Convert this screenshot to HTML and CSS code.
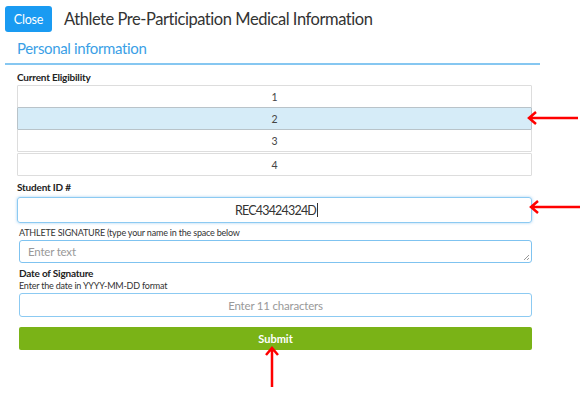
FILE: index.html
```html
<!DOCTYPE html>
<html>
<head>
<meta charset="utf-8">
<link rel="stylesheet" href="styles.css">
</head>
<body>
<div class="page">
  <header class="header">
    <button class="close-btn">Close</button>
    <h1 class="title">Athlete Pre-Participation Medical Information</h1>
  </header>
  <h2 class="section-title">Personal information</h2>
  <form class="form">
    <div class="label bold">Current Eligibility</div>
    <div class="options">
      <div class="option">1</div>
      <div class="option selected">2</div>
      <div class="option">3</div>
      <div class="option">4</div>
    </div>
    <div class="label bold label-gap">Student ID #</div>
    <div class="input focused"><span class="value">REC43424324D</span><span class="caret"></span></div>
    <div class="indent">
      <div class="label small">ATHLETE SIGNATURE (type your name in the space below</div>
      <div class="textarea"><span class="placeholder">Enter text</span>
        <svg class="grip" width="7" height="7" viewBox="0 0 7 7"><path d="M6 1 L1 6 M6 4 L4 6" stroke="#999" stroke-width="1"/></svg>
      </div>
      <div class="label bold label-gap2">Date of Signature</div>
      <div class="label small">Enter the date in YYYY-MM-DD format</div>
      <div class="input plain center"><span class="placeholder">Enter 11 characters</span></div>
      <button class="submit" type="button">Submit</button>
    </div>
  </form>
  <svg class="arrow arrow-1" width="52" height="14" viewBox="0 0 52 14"><path d="M51 7 H3 M9 1 L2 7 L9 13" stroke="#ff0000" stroke-width="2.5" fill="none"/></svg>
  <svg class="arrow arrow-2" width="52" height="14" viewBox="0 0 52 14"><path d="M51 7 H3 M9 1 L2 7 L9 13" stroke="#ff0000" stroke-width="2.5" fill="none"/></svg>
  <svg class="arrow arrow-3" width="14" height="42" viewBox="0 0 14 42"><path d="M7 41 V3 M1 9 L7 2 L13 9" stroke="#ff0000" stroke-width="2.5" fill="none"/></svg>
</div>
</body>
</html>
```
FILE: styles.css
```css
* { box-sizing: border-box; }
html, body { margin: 0; padding: 0; background: #fff; }
body { font-family: Lato, "Open Sans", sans-serif; color: #333; }
.page { position: relative; width: 583px; height: 404px; padding: 6px 0 0 5px; }
.header { display: flex; align-items: center; gap: 12px; height: 26px; }
.close-btn {
  width: 47px; height: 26px; border: none; border-radius: 3px;
  background: #1a9bf2; color: #fff; font-family: inherit; font-size: 12.5px; padding: 0; letter-spacing: -0.2px;
}
.title { margin: 0; font-size: 16.5px; font-weight: 400; color: #333; letter-spacing: -0.45px; }
.section-title {
  margin: 7px 0 0 0; width: 535px; padding: 0 0 6px 12px; font-size: 15px; font-weight: 400;
  color: #3b9fe6; border-bottom: 2px solid #86c7f1; line-height: 18px; letter-spacing: -0.35px;
}
.form { width: 527px; padding-left: 12px; margin-top: 6px; }
.label { font-size: 10px; line-height: 13px; color: #222; letter-spacing: -0.2px; }
.bold { font-weight: 700; }
.small { font-weight: 400; font-size: 9px; line-height: 12px; color: #333; }
.options { margin-top: 1px; display: flex; flex-direction: column; }
.option {
  height: 23px; border: 1px solid #ddd; border-radius: 1px; display: flex; align-items: center;
  justify-content: center; font-size: 10.5px; color: #444; margin-top: -1px;
}
.option:first-child { margin-top: 0; }
.option:last-child { margin-top: 1px; }
.option.selected { background: #d6ecf8; border-color: #b9c3c9; position: relative; }
.label-gap { margin-top: 5px; }
.input {
  height: 26px; border: 1px solid #8ccaf2; border-radius: 3px; display: flex; align-items: center;
  justify-content: center; font-size: 12.5px; margin-top: 2px;
}
.input.focused { box-shadow: 0 0 3px rgba(102,175,233,0.6); padding-left: 4px; margin-top: 3px; }
.value { color: #333; letter-spacing: -0.8px; }
.caret { display: inline-block; width: 1px; height: 14px; background: #333; margin-left: 1px; }
.indent { padding-left: 2px; margin-top: 4px; }
.textarea {
  position: relative; height: 23px; border: 1px solid #7fc3f0; border-radius: 3px; margin-top: 1px;
  display: flex; align-items: center; padding-left: 8px; font-size: 11.5px;
}
.placeholder { color: #999; font-size: 11.5px; letter-spacing: -0.2px; }
.grip { position: absolute; right: 1px; bottom: 1px; }
.label-gap2 { margin-top: 4px; }
.input.plain { height: 24px; margin-top: 1px; }
.submit {
  display: block; width: 100%; height: 23px; margin-top: 10px; border: none; border-radius: 2px;
  background: #7ab317; color: #fff; font-family: inherit; font-size: 11px; font-weight: 700; padding: 0;
}
.arrow { position: absolute; }
.arrow-1 { left: 527px; top: 111px; }
.arrow-2 { left: 529px; top: 200px; }
.arrow-3 { left: 265px; top: 346px; }
```
